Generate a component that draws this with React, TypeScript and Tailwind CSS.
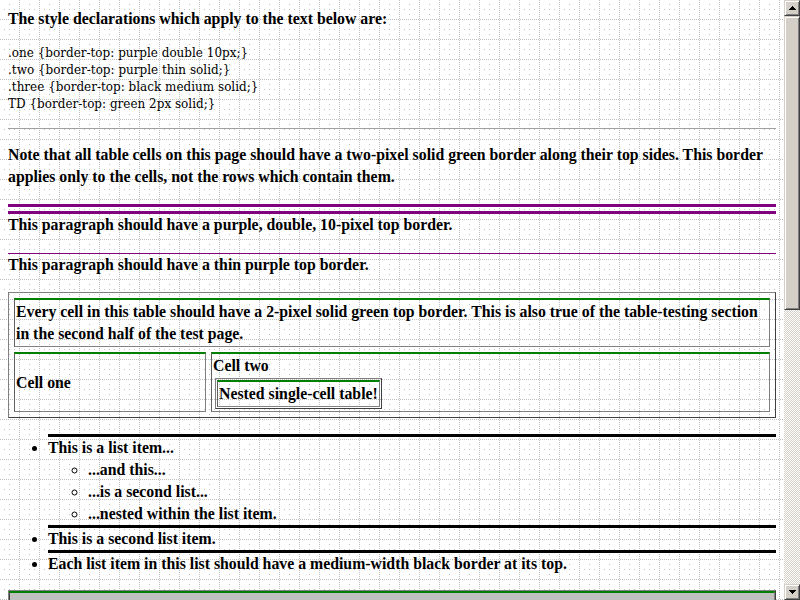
import React from "react";

const Up = () => (
  <svg width="7" height="4" viewBox="0 0 7 4" shapeRendering="crispEdges">
    <rect x="3" y="0" width="1" height="1" fill="#000" />
    <rect x="2" y="1" width="3" height="1" fill="#000" />
    <rect x="1" y="2" width="5" height="1" fill="#000" />
    <rect x="0" y="3" width="7" height="1" fill="#000" />
  </svg>
);
const Down = () => (
  <svg width="7" height="4" viewBox="0 0 7 4" shapeRendering="crispEdges">
    <rect x="0" y="0" width="7" height="1" fill="#000" />
    <rect x="1" y="1" width="5" height="1" fill="#000" />
    <rect x="2" y="2" width="3" height="1" fill="#000" />
    <rect x="3" y="3" width="1" height="1" fill="#000" />
  </svg>
);

export default function App() {
  return (
    <div className="flex w-[800px] h-[600px] overflow-hidden">
      <div className="w-[784px] h-[600px] overflow-hidden bg-white [background-image:conic-gradient(at_1px_1px,transparent_75%,#c0c0c0_0),conic-gradient(at_1px_1px,transparent_75%,#c0c0c0_0),conic-gradient(at_1px_1px,transparent_75%,#c0c0c0_0),conic-gradient(at_1px_1px,transparent_75%,#c0c0c0_0),conic-gradient(at_1px_1px,transparent_75%,#c0c0c0_0),conic-gradient(at_1px_1px,transparent_75%,#c0c0c0_0),conic-gradient(at_1px_1px,transparent_75%,#c0c0c0_0)] [background-size:20px_2px,2px_20px,20px_20px,20px_20px,20px_20px,20px_20px,20px_20px] [background-position:19px_0,0_19px,9px_4px,4px_9px,9px_9px,14px_9px,9px_14px]">
        <div className="px-2 pt-2 text-black font-['Liberation_Serif',serif] font-bold text-[15.8px] leading-[22px]">
          <p>The style declarations which apply to the text below are:</p>
          <div className="mt-[15px] font-['DejaVu_Serif',serif] font-normal text-[12px] leading-[17px] whitespace-pre">
            <div>.one {"{"}border-top: purple double 10px;{"}"}</div>
            <div>.two {"{"}border-top: purple thin solid;{"}"}</div>
            <div>.three {"{"}border-top: black medium solid;{"}"}</div>
            <div>TD {"{"}border-top: green 2px solid;{"}"}</div>
          </div>
          <div className="mt-[15px] h-[2px] border-t border-t-[#a0a0a0]" />
          <p className="mt-[14px] whitespace-nowrap">
            Note that all table cells on this page should have a two-pixel solid green border along their top sides. This border
            <br />
            applies only to the cells, not the rows which contain them.
          </p>
          <p className="mt-[16px] border-t-[10px] border-double border-t-[#800080]">
            This paragraph should have a purple, double, 10-pixel top border.
          </p>
          <p className="mt-[17px] border-t border-t-[#800080]">
            This paragraph should have a thin purple top border.
          </p>

          <div className="mt-[16px] flex flex-col gap-[5px] p-[5px] border border-t-[#808080] border-l-[#808080] border-r-[#404040] border-b-[#404040]">
            <div className="border-t-2 border-t-[#008000] border-x border-b border-x-[#808080] border-b-[#808080] border-l-[#606060] p-[1px] whitespace-nowrap">
              Every cell in this table should have a 2-pixel solid green top border. This is also true of the table-testing section
              <br />
              in the second half of the test page.
            </div>
            <div className="flex gap-[5px]">
              <div className="w-[192px] flex items-center border-t-2 border-t-[#008000] border-x border-b border-x-[#808080] border-b-[#808080] border-l-[#606060] p-[1px]">
                Cell one
              </div>
              <div className="flex-1 border-t-2 border-t-[#008000] border-x border-b border-x-[#808080] border-b-[#808080] border-l-[#606060] pt-[1px] px-[1px] pb-[2px]">
                <div>Cell two</div>
                <div className="mt-[1px] ml-[2px] w-fit p-[1px] border border-t-[#808080] border-l-[#808080] border-r-[#404040] border-b-[#404040]">
                  <div className="border-t-2 border-t-[#008000] border-x border-b border-x-[#808080] border-b-[#808080] border-l-[#606060] p-[1px] whitespace-nowrap">
                    Nested single-cell table!
                  </div>
                </div>
              </div>
            </div>
          </div>

          <ul className="mt-[16px] pl-10 list-disc">
            <li className="border-t-[3px] border-t-black">
              This is a list item...
              <ul className="pl-10 list-[circle]">
                <li>...and this...</li>
                <li>...is a second list...</li>
                <li>...nested within the list item.</li>
              </ul>
            </li>
            <li className="border-t-[3px] border-t-black">This is a second list item.</li>
            <li className="border-t-[3px] border-t-black">
              Each list item in this list should have a medium-width black border at its top.
            </li>
          </ul>

          <div className="mt-[15px] border-t border-l border-r border-t-[#808080] border-l-[#808080] border-r-[#404040]">
            <div className="h-[30px] bg-[#c0c0c0] border-t-2 border-t-[#008000] border-l border-r border-l-[#404040] border-r-[#808080]" />
          </div>
        </div>
      </div>

      <div className="w-4 h-[600px] flex flex-col">
        <div className="h-4 bg-[#d4d0c8] border border-t-[#d4d0c8] border-l-[#d4d0c8] border-r-[#404040] border-b-[#404040] shadow-[inset_1px_1px_0_#fff,inset_-1px_-1px_0_#808080] flex items-center justify-center">
          <Up />
        </div>
        <div className="h-[294px] bg-[#d4d0c8] border border-t-[#d4d0c8] border-l-[#d4d0c8] border-r-[#404040] border-b-[#404040] shadow-[inset_1px_1px_0_#fff,inset_-1px_-1px_0_#808080]" />
        <div className="flex-1 [background-image:conic-gradient(#d4d0c8_25%,#fff_0_50%,#d4d0c8_0_75%,#fff_0)] [background-size:2px_2px]" />
        <div className="h-4 bg-[#d4d0c8] border border-t-[#d4d0c8] border-l-[#d4d0c8] border-r-[#404040] border-b-[#404040] shadow-[inset_1px_1px_0_#fff,inset_-1px_-1px_0_#808080] flex items-center justify-center">
          <Down />
        </div>
      </div>
    </div>
  );
}
